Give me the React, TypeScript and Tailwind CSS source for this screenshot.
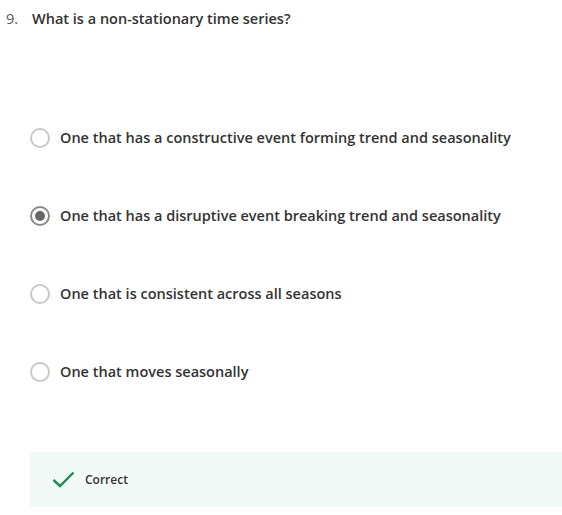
export default function App() {
  const options = [
    "One that has a constructive event forming trend and seasonality",
    "One that has a disruptive event breaking trend and seasonality",
    "One that is consistent across all seasons",
    "One that moves seasonally",
  ];
  const selected = 1;
  return (
    <div className="w-[562px] h-[515px] bg-white font-['Open_Sans',sans-serif] text-[#333]">
      <div className="flex items-baseline pt-[9px] text-[14.5px] leading-[20px]">
        <span className="w-[32px] pl-[6px] text-[#555]">9.</span>
        <span className="font-semibold">What is a non-stationary time series?</span>
      </div>
      <div className="pt-[99px] pl-[30px] flex flex-col gap-[58px]">
        {options.map((o, i) => (
          <label key={i} className="flex items-center h-[20px]">
            <span
              className={
                i === selected
                  ? "w-[20px] h-[20px] rounded-full border-2 border-[#8a8a8a] flex items-center justify-center shrink-0 bg-white"
                  : "w-[20px] h-[20px] rounded-full border-2 border-[#c8c8c8] flex items-center justify-center shrink-0 bg-white"
              }
            >
              {i === selected && <span className="w-[10px] h-[10px] rounded-full bg-[#666]" />}
            </span>
            <span className="ml-[10px] text-[14.5px] font-semibold">{o}</span>
          </label>
        ))}
      </div>
      <div className="mt-[70px] ml-[30px] h-[55px] bg-[#f3f9f7] flex items-center pl-[22px]">
        <svg width="23" height="17" viewBox="0 0 23 17" fill="none">
          <path d="M1.5 9 L8 15 L21.5 1.5" stroke="#1e8a5a" strokeWidth="2.4" />
        </svg>
        <span className="ml-[10px] text-[12px] font-semibold text-[#333]">Correct</span>
      </div>
    </div>
  );
}
